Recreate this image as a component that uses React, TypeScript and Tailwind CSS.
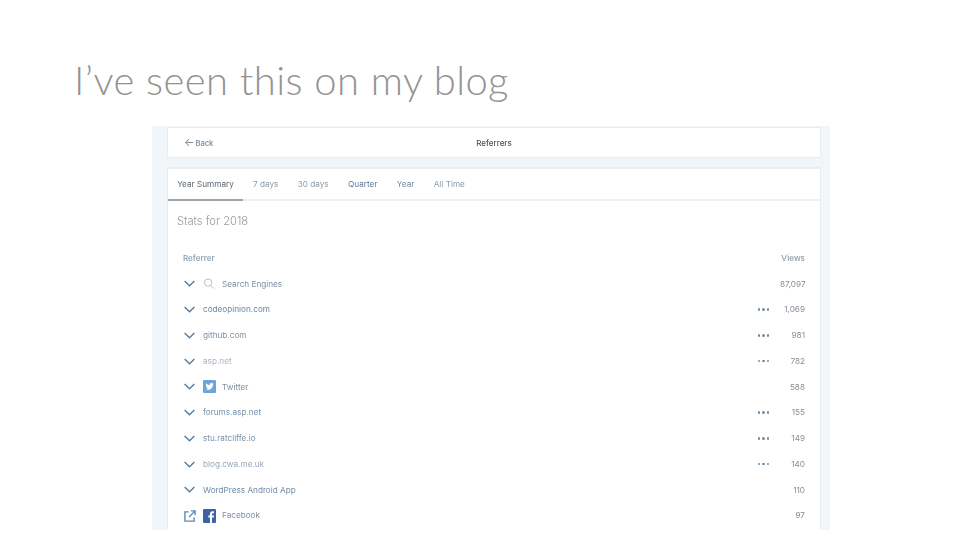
import React from 'react'

const tabs = ['7 days', '30 days', 'Quarter', 'Year', 'All Time']

type Row = { name: string; views: string; more?: boolean; icon?: 'search' | 'twitter' | 'facebook'; ext?: boolean; color: string }

const rows: Row[] = [
  { name: 'Search Engines', views: '87,097', icon: 'search', color: 'text-[#7f8f9f]' },
  { name: 'codeopinion.com', views: '1,069', more: true, color: 'text-[#6a86a2]' },
  { name: 'github.com', views: '981', more: true, color: 'text-[#7893ab]' },
  { name: 'asp.net', views: '782', more: true, color: 'text-[#a6b5c4]' },
  { name: 'Twitter', views: '588', icon: 'twitter', color: 'text-[#7f8f9f]' },
  { name: 'forums.asp.net', views: '155', more: true, color: 'text-[#7893ab]' },
  { name: 'stu.ratcliffe.io', views: '149', more: true, color: 'text-[#7893ab]' },
  { name: 'blog.cwa.me.uk', views: '140', more: true, color: 'text-[#97a9ba]' },
  { name: 'WordPress Android App', views: '110', color: 'text-[#6f8ba6]' },
  { name: 'Facebook', views: '97', icon: 'facebook', ext: true, color: 'text-[#7f8f9f]' },
]

const Chevron = () => (
  <svg width="11" height="7" viewBox="0 0 11 7" fill="none" stroke="#5a7c98" strokeWidth="1.4">
    <path d="M0.6 1 L5.500 5.800 L10.400 1" />
  </svg>
)

const External = () => (
  <svg width="12" height="12" viewBox="0 0 13 13" fill="none" stroke="#5a8bb0" strokeWidth="1.5">
    <path d="M5 2 H1 V12 H11 V8" />
    <path d="M5.500 7.500 L11.500 1.500 M7.500 1 H12 V5.500" />
  </svg>
)

const RowIcon = ({ icon }: { icon: Row['icon'] }) => {
  if (icon === 'search') {
    return (
      <svg width="12" height="12" viewBox="0 0 13 13" fill="none" stroke="#b0bbc5" strokeWidth="1">
        <circle cx="5.500" cy="5" r="4" />
        <path d="M8.500 8 L12 11.500" />
      </svg>
    )
  }
  if (icon === 'twitter') {
    return (
      <svg width="13" height="13" viewBox="0 0 13 13">
        <rect width="13" height="13" rx="1" fill="#6ea5d8" />
        <path
          fill="#ffffff"
          d="M10.800 3.900c-.3.100-.6.200-1 .3.400-.2.600-.6.800-1-.3.200-.7.300-1.100.4a1.700 1.700 0 0 0-2.900 1.600C5.200 5.100 4 4.400 3.100 3.300c-.5.800-.2 1.800.5 2.300-.3 0-.5-.1-.8-.2 0 .8.600 1.500 1.400 1.700-.3.100-.5.100-.8 0 .2.700.9 1.200 1.600 1.200-.7.600-1.700.8-2.600.7.800.5 1.700.8 2.600.8 3.200 0 5-2.700 4.900-5.100.3-.2.600-.5.900-.8z"
        />
      </svg>
    )
  }
  if (icon === 'facebook') {
    return (
      <svg width="13" height="14" viewBox="0 0 13 14">
        <rect width="13" height="14" rx="1" fill="#3f62a6" />
        <path fill="#ffffff" d="M9 14V8.500h1.700l.3-2H9V5.200c0-.6.200-1 1-1h1V2.400C10.700 2.400 10.200 2.300 9.600 2.300 8.100 2.300 7 3.200 7 4.900v1.600H5.300v2H7V14z" />
      </svg>
    )
  }
  return null
}

export default function App() {
  return (
    <div className="w-[960px] h-[540px] bg-white overflow-hidden flex flex-col font-['Inter',sans-serif]">
      <h1 className="h-[126px] shrink-0 pl-[74px] pt-[51px] font-['Lato',sans-serif] font-light text-[40px] leading-[58px] tracking-[0.42px] text-[#939393]">
        I’ve seen this on my blog
      </h1>

      <div className="ml-[152px] w-[678px] h-[404px] bg-[#f3f6f8] pl-[15px] pr-[9px] pt-px flex flex-col gap-[9px] blur-[0.35px]">
        {/* Header card */}
        <div className="h-[31px] shrink-0 bg-white border border-[#e9edf0] flex items-center relative">
          <div className="flex items-center gap-[1px] pl-[16px] pt-[2px] text-[7.5px] font-semibold text-[#8795a3]">
            <span className="text-[11px] leading-none -mt-[3px] font-normal text-[#7a8b9c]">←</span>
            Back
          </div>
          <div className="absolute left-0 right-0 pt-px text-center text-[8px] font-medium text-[#47525c]">Referrers</div>
        </div>

        {/* Stats card */}
        <div className="flex-1 bg-white border-x border-t-2 border-[#e9edf0] flex flex-col">
          <div className="h-[32px] shrink-0 flex items-stretch border-b-2 border-[#eef1f3] text-[8.2px]">
            <div className="w-[75px] -mb-[2px] pt-px flex items-center justify-center border-b-2 border-[#9aa4ac] text-[#5c6770]">
              Year Summary
            </div>
            <div className="flex items-center gap-[19.4px] pt-px pl-[10px] text-[#8c9aa8]">
              {tabs.map((t) => (
                <span key={t} className={t === 'Quarter' ? 'text-[#5f7c9a]' : t === 'Year' ? 'text-[#6f8ba5]' : ''}>
                  {t}
                </span>
              ))}
            </div>
          </div>

          <div className="pl-[9px] pt-[12px] h-[38px] shrink-0 text-[11.2px] font-light leading-[16px] text-[#949da5]">Stats for 2018</div>

          <div className="flex justify-between pl-[15px] pr-[15px] pt-[13px] h-[32px] shrink-0 text-[8px] font-semibold text-[#98a8b5]">
            <span>Referrer</span>
            <span>Views</span>
          </div>

          <div className="flex flex-col">
            {rows.map((r) => (
              <div key={r.name} className="h-[25.75px] shrink-0 flex items-center pl-[16px] pr-[15px] text-[8.2px]">
                <div className="w-[19px] shrink-0 flex items-center">{r.ext ? <External /> : <Chevron />}</div>
                {r.icon && (
                  <div className="w-[19px] shrink-0 flex items-center">
                    <RowIcon icon={r.icon} />
                  </div>
                )}
                <span className={r.color}>{r.name}</span>
                <div className="flex-1" />
                {r.more && (
                  <div className="flex gap-[2px] mr-[11px]">
                    <i className="w-[2.5px] h-[2.5px] rounded-full bg-[#6f8fa6]" />
                    <i className="w-[2.5px] h-[2.5px] rounded-full bg-[#6f8fa6]" />
                    <i className="w-[2.5px] h-[2.5px] rounded-full bg-[#6f8fa6]" />
                  </div>
                )}
                <span className="w-[25px] text-right text-[#858e96]">{r.views}</span>
              </div>
            ))}
          </div>
        </div>
      </div>
    </div>
  )
}
